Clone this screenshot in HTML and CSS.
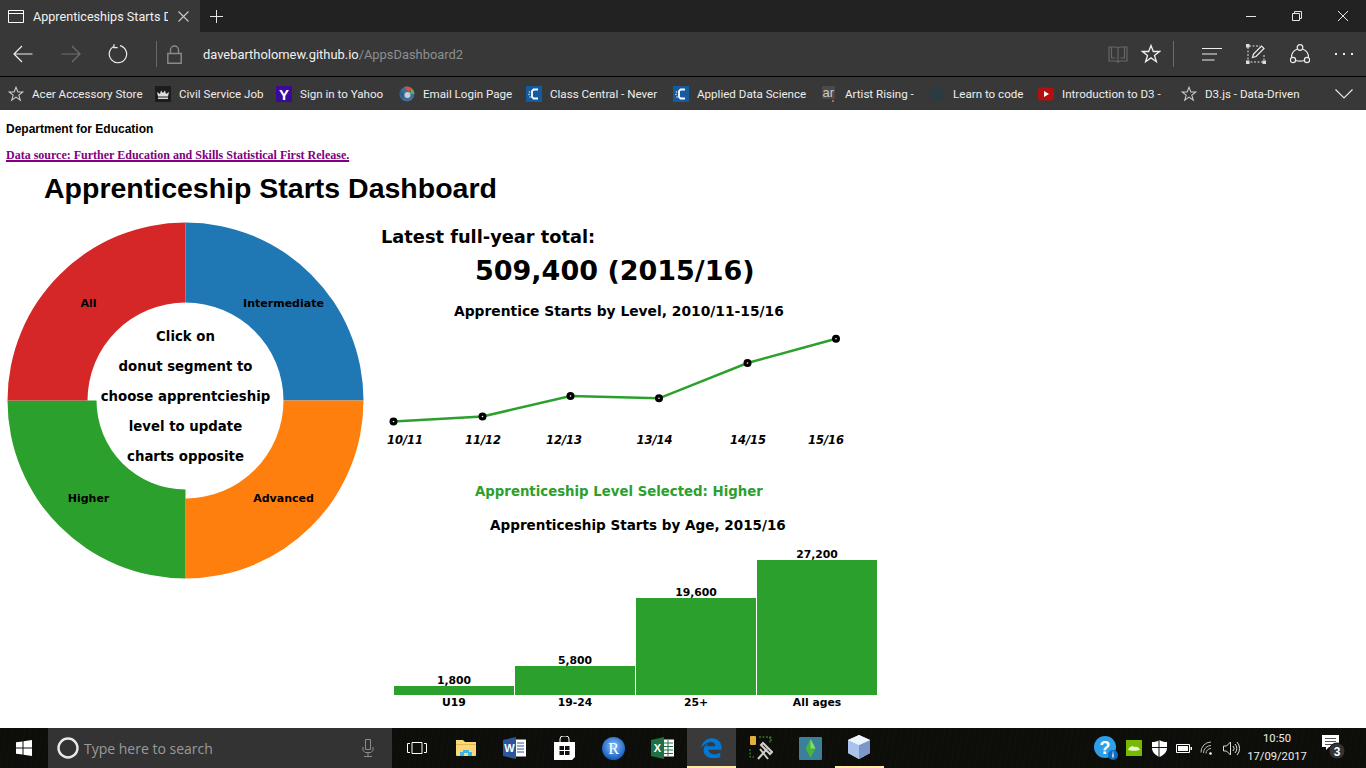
FILE: index.html
```html
<!DOCTYPE html>
<html lang="en">
<head>
  <meta charset="UTF-8" />
  <title>Apprenticeships Starts Dashboard</title>
  <link rel="stylesheet" href="styles.css">
</head>
<body>
  <svg class="defs" width="0" height="0">
    <symbol id="star" viewBox="0 0 20 20">
      <path d="M10 1.5l2.3 6h6.2l-5 3.9 1.9 6.3-5.4-3.8-5.4 3.8 1.9-6.3-5-3.9h6.2z" fill="none" stroke="currentColor" stroke-width="1.3" stroke-linejoin="miter"/>
    </symbol>
    <symbol id="cc" viewBox="0 0 16 16">
      <rect width="16" height="16" fill="#145a9e"/>
      <path d="M12 3.500H7.500L6 5v6l1.500 1.500H12" fill="none" stroke="#fff" stroke-width="1.800"/>
      <circle cx="3.500" cy="6" r=".8" fill="#cfe2f3"/>
      <circle cx="3" cy="8.500" r=".8" fill="#cfe2f3"/>
      <circle cx="4" cy="11" r=".8" fill="#cfe2f3"/>
    </symbol>
  </svg>

  <header class="browser">
    <div class="tabstrip">
      <div class="tab">
        <svg class="tab-icon" width="16" height="13" viewBox="0 0 16 13"><path d="M.5.5h15v12H.5zM.5 3.5h15" fill="none" stroke="#fff"/></svg>
        <span class="tab-title">Apprenticeships Starts D</span>
        <svg class="tab-close" width="11" height="11" viewBox="0 0 11 11"><path d="M.5.5l10 10M10.5.5l-10 10" stroke="#ccc" stroke-width="1.1"/></svg>
      </div>
      <svg class="new-tab" width="13" height="13" viewBox="0 0 13 13"><path d="M6.5 0v13M0 6.5h13" stroke="#e6e6e6" stroke-width="1"/></svg>
      <div class="win-btns">
        <svg width="10" height="10" viewBox="0 0 10 10"><path d="M0 5.5h10" stroke="#e6e6e6"/></svg>
        <svg width="10" height="10" viewBox="0 0 10 10"><path d="M.5 2.5h7v7h-7zM2.5 2.5v-2h7v7h-2" fill="none" stroke="#e6e6e6"/></svg>
        <svg width="10" height="10" viewBox="0 0 10 10"><path d="M0 0l10 10M10 0L0 10" stroke="#e6e6e6" stroke-width="1"/></svg>
      </div>
    </div>

    <div class="toolbar">
      <svg class="nav-back" width="20" height="18" viewBox="0 0 20 18"><path d="M19.5 9H1M9 1L1 9l8 8" fill="none" stroke="#eee" stroke-width="1.2"/></svg>
      <svg class="nav-forward" width="20" height="18" viewBox="0 0 20 18"><path d="M.5 9H19M11 1l8 8-8 8" fill="none" stroke="#6f6f6f" stroke-width="1.2"/></svg>
      <svg class="nav-refresh" width="20" height="20" viewBox="0 0 20 20"><path d="M6.2 2.2A8.7 8.7 0 1 0 12 1.6M6 .2v3.4h3.6" fill="none" stroke="#eee" stroke-width="1.2"/></svg>
      <span class="tb-sep"></span>
      <svg class="nav-lock" width="15" height="19" viewBox="0 0 15 19"><path d="M.8 8.5h13.4v9.7H.8zM3.5 8.5V5a4 4 0 0 1 8 0v3.5" fill="none" stroke="#8a8a8a" stroke-width="1.4"/></svg>
      <div class="address"><span class="host">davebartholomew.github.io</span><span class="path">/AppsDashboard2</span></div>
      <svg class="tb-book" width="20" height="18" viewBox="0 0 20 18"><path d="M1 2h7l2 1 2-1h7v14h-7l-2 1-2-1H1zM10 3v14M3.500 2v11h4M16.500 2v11h-4" fill="none" stroke="#666" stroke-width="1.2"/></svg>
      <svg class="tb-star"><use href="#star"/></svg>
      <span class="tb-sep"></span>
      <svg class="tb-hub" width="20" height="15" viewBox="0 0 20 15"><path d="M0 1.500h20M0 7h15M0 13h12.500" stroke="#eee" stroke-width="1.2"/></svg>
      <svg class="tb-note" width="20" height="20" viewBox="0 0 20 20"><path d="M2 3v15h15M3 2h11M18 11v5" fill="none" stroke="#ddd" stroke-dasharray="2 1.500"/><path d="M6.500 13.500l1-3.500 8-8 2.500 2.500-8 8z" fill="none" stroke="#eee" stroke-width="1.200"/><rect x="0" y="0" width="3.500" height="3.500" fill="#ddd"/><rect x="0" y="16.500" width="3.500" height="3.500" fill="#ddd"/><rect x="16.500" y="16.500" width="3.500" height="3.500" fill="#ddd"/></svg>
      <svg class="tb-share" width="20" height="20" viewBox="0 0 20 20"><g fill="none" stroke="#eee" stroke-width="1.200"><circle cx="10" cy="3.500" r="2.800"/><circle cx="3" cy="16" r="2.600"/><circle cx="17" cy="16" r="2.600"/><path d="M7.600 5A9 9 0 0 0 1.500 13.800M12.400 5a9 9 0 0 1 6.100 8.800M5.600 16.500c3 .8 6 .8 8.800 0"/></g></svg>
      <div class="tb-more"><i></i><i></i><i></i></div>
    </div>

    <nav class="favbar">
      <a class="fav"><svg class="fav-icon fav-star"><use href="#star"/></svg>Acer Accessory Store</a>
      <a class="fav"><svg class="fav-icon" viewBox="0 0 16 16"><rect width="16" height="16" fill="#1c1c1c"/><path d="M3 10.500L2 6l3 2 1-3.500L8 7l2-2.500L11 8l3-2-1 4.500z" fill="#ddd"/><rect x="3" y="11.500" width="10" height="1.500" fill="#ddd"/></svg>Civil Service Job</a>
      <a class="fav"><svg class="fav-icon" viewBox="0 0 16 16"><rect width="16" height="16" fill="#3b0a9a"/><text class="fav-y" x="8" y="13.500">Y</text></svg>Sign in to Yahoo</a>
      <a class="fav"><svg class="fav-icon" viewBox="0 0 16 16"><circle cx="8" cy="8" r="7.500" fill="#3f6f96"/><path d="M5 1.100A7.500 7.500 0 0 1 13 2.500L10 6z" fill="#d9503f"/><path d="M13 2.500a7.500 7.500 0 0 1 2.500 5.500L11 7.500z" fill="#6cae4d"/><path d="M2 4l3 4-1 5.500A7.500 7.500 0 0 1 2 4z" fill="#2e5e86"/><circle cx="8.500" cy="9" r="3" fill="#c9ced4"/></svg>Email Login Page</a>
      <a class="fav"><svg class="fav-icon"><use href="#cc"/></svg>Class Central - Never</a>
      <a class="fav"><svg class="fav-icon"><use href="#cc"/></svg>Applied Data Science</a>
      <a class="fav"><svg class="fav-icon fav-ar" viewBox="0 0 13 16"><rect width="13" height="13" fill="#4a4a4a"/><text class="fav-art" x=".5" y="11">ar</text><rect x="10" y="14" width="2" height="2" fill="#e0565a"/></svg>Artist Rising -</a>
      <a class="fav"><svg class="fav-icon" viewBox="0 0 16 16"><circle cx="8" cy="8" r="7.500" fill="#2c3a42"/></svg>Learn to code</a>
      <a class="fav"><svg class="fav-icon" viewBox="0 0 16 16"><rect y="1.500" width="16" height="13" rx="3" fill="#b3100f"/><path d="M6 5l5 3-5 3z" fill="#fff"/></svg>Introduction to D3 -</a>
      <a class="fav"><svg class="fav-icon fav-star"><use href="#star"/></svg>D3.js - Data-Driven</a>
      <svg class="fav-more" width="18" height="10" viewBox="0 0 18 10"><path d="M.5.500L9 9l8.500-8.500" fill="none" stroke="#e6e6e6" stroke-width="1.200"/></svg>
    </nav>
  </header>

  <main class="page">
    <div class="dept">Department for Education</div>
    <a class="source" href="#">Data source: Further Education and Skills Statistical First Release.</a>
    <h1>Apprenticeship Starts Dashboard</h1>

    <div class="dash">
      <svg class="donut" width="372" height="372" viewBox="0 215 372 372">
        <path d="M185.500 222.500A178 178 0 0 1 363.500 400.500H283.500A98 98 0 0 0 185.500 302.500Z" fill="#1f77b4"/>
        <path d="M363.500 400.500A178 178 0 0 1 185.500 578.500V498.500A98 98 0 0 0 283.500 400.500Z" fill="#ff7f0e"/>
        <path d="M185.500 578.500A178 178 0 0 1 7.500 400.500H96.500A89 89 0 0 0 185.500 489.500Z" fill="#2ca02c"/>
        <path d="M7.500 400.500A178 178 0 0 1 185.500 222.500V302.500A98 98 0 0 0 87.500 400.500Z" fill="#d62728"/>
        <text class="seg" x="88.500" y="307">All</text>
        <text class="seg" x="283.500" y="307">Intermediate</text>
        <text class="seg" x="88.500" y="502">Higher</text>
        <text class="seg" x="283.500" y="502">Advanced</text>
        <text class="hint" x="185.500" y="341">Click on</text>
        <text class="hint" x="185.500" y="371">donut segment to</text>
        <text class="hint" x="185.500" y="401">choose apprentcieship</text>
        <text class="hint" x="185.500" y="431">level to update</text>
        <text class="hint" x="185.500" y="461">charts opposite</text>
      </svg>

      <section class="panel">
        <div class="latest">Latest full-year total:</div>
        <div class="total">509,400 (2015/16)</div>
        <div class="chart-title level-title">Apprentice Starts by Level, 2010/11-15/16</div>
        <svg class="line-chart" width="520" height="125" viewBox="372 325 520 125">
          <polyline points="393.500,421.500 482.500,416.500 570.500,396 659,398.300 747.500,363 836,338.700" fill="none" stroke="#2ca02c" stroke-width="2.500"/>
          <g fill="#fff" stroke="#000" stroke-width="3.200">
            <circle cx="393.500" cy="421.500" r="2.400"/>
            <circle cx="482.500" cy="416.500" r="2.400"/>
            <circle cx="570.500" cy="396" r="2.400"/>
            <circle cx="659" cy="398.300" r="2.400"/>
            <circle cx="747.500" cy="363" r="2.400"/>
            <circle cx="836" cy="338.700" r="2.400"/>
          </g>
          <text class="year" x="405" y="444">10/11</text>
          <text class="year" x="483" y="444">11/12</text>
          <text class="year" x="564" y="444">12/13</text>
          <text class="year" x="654.500" y="444">13/14</text>
          <text class="year" x="748" y="444">14/15</text>
          <text class="year" x="826" y="444">15/16</text>
        </svg>
        <div class="selected">Apprenticeship Level Selected: Higher</div>
        <div class="chart-title age-title">Apprenticeship Starts by Age, 2015/16</div>
        <svg class="bar-chart" width="520" height="172" viewBox="372 540 520 172">
          <g fill="#2ca02c">
            <rect x="394" y="686" width="120" height="9"/>
            <rect x="515" y="666" width="120" height="29"/>
            <rect x="636" y="598" width="120" height="97"/>
            <rect x="757" y="560" width="120" height="135"/>
          </g>
          <text class="bar-val" x="454" y="684">1,800</text>
          <text class="bar-val" x="575" y="664">5,800</text>
          <text class="bar-val" x="696" y="596">19,600</text>
          <text class="bar-val" x="817" y="558">27,200</text>
          <text class="bar-lab" x="454" y="706">U19</text>
          <text class="bar-lab" x="575" y="706">19-24</text>
          <text class="bar-lab" x="696" y="706">25+</text>
          <text class="bar-lab" x="817" y="706">All ages</text>
        </svg>
      </section>
    </div>
  </main>

  <footer class="taskbar">
    <div class="start"><svg width="16" height="16" viewBox="0 0 16 16"><path d="M0 2.300L6.500 1.400V7.500H0zM7.500 1.200L16 0V7.500H7.500zM0 8.500H6.500V14.600L0 13.700zM7.500 8.500H16V16L7.500 14.800z" fill="#fff"/></svg></div>
    <div class="search">
      <svg class="cortana" width="22" height="22" viewBox="0 0 22 22"><circle cx="11" cy="11" r="9.500" fill="none" stroke="#e8e8e8" stroke-width="2.400"/></svg>
      <span class="search-text">Type here to search</span>
      <svg class="mic" width="12" height="18" viewBox="0 0 12 18"><path d="M3.500.5h5v10h-5zM1 8v3.500L3 13.500h6l2-2V8M6 13.500V17M2 17.500h8" fill="none" stroke="#8c8c8c"/></svg>
    </div>
    <div class="task"><svg width="20" height="12" viewBox="0 0 20 12"><path d="M5 .5h10v11H5zM3 1.500H.5v9H3M17 1.500h2.500v9H17" fill="none" stroke="#fff"/></svg></div>
    <div class="task"><svg width="22" height="18" viewBox="0 0 22 18"><path d="M1 1h7l2 2h11v13a1 1 0 0 1-1 1H2a1 1 0 0 1-1-1z" fill="#f8d878"/><path d="M1 5h20v1H1z" fill="#e3b94f"/><path d="M5 17v-4h3v-2h6v2h3v4h-4v-3h-4v3z" fill="#38b4e6"/></svg></div>
    <div class="task"><svg width="23" height="22" viewBox="0 0 23 22"><rect x="9" y="2.500" width="14" height="17" fill="#fff"/><path d="M14 6h7M14 9h7M14 12h7M14 15h7" stroke="#2b579a"/><path d="M0 3L13 0v22L0 19z" fill="#2b579a"/><text class="ws-letter" x="6.500" y="15">W</text></svg></div>
    <div class="task"><svg width="21" height="24" viewBox="0 0 21 24"><path d="M6 6V3a3 3 0 0 1 3-3h3a3 3 0 0 1 3 3v3" fill="none" stroke="#fff"/><path d="M0 6h21v15l-3 3H0z" fill="#fff"/><path d="M5.500 10h4.500v4H5.500zM11 10h4.500v4H11zM5.500 15h4.500v4H5.500zM11 15h4.500v4H11z" fill="#111"/></svg></div>
    <div class="task"><svg width="23" height="23" viewBox="0 0 23 23"><defs><radialGradient id="rball" cx=".5" cy=".4" r=".6"><stop offset="0" stop-color="#8cc4f8"/><stop offset="1" stop-color="#0f57bd"/></radialGradient></defs><circle cx="11.500" cy="11.500" r="11.500" fill="url(#rball)"/><text class="r-letter" x="11.500" y="17">R</text></svg></div>
    <div class="task"><svg width="23" height="22" viewBox="0 0 23 22"><rect x="9" y="2.500" width="14" height="17" fill="#fff"/><path d="M13 6h9M13 9.500h9M13 13h9M13 16.500h9M17 3v16" stroke="#217346"/><path d="M0 3L13 0v22L0 19z" fill="#1e7145"/><text class="ws-letter" x="6.500" y="15">X</text></svg></div>
    <div class="task task-active"><svg width="21" height="21" viewBox="0 0 24 24"><path d="M.5 11C2 5 7 1.500 12.500 1.500 19 1.500 23.500 6 23.500 12v2.500H8.500c.3 3.500 3.500 5.300 7 5.300 2.500 0 4.800-.7 6.500-1.700v4.700c-2 1-4.500 1.500-7.300 1.500-6.500 0-11.700-3.500-11.700-9.300 0-3.500 2-6.300 5.500-8-1.200 1.200-1.800 2.300-2 3.700h10c0-2.800-1.500-5-5.200-5-4 0-7.600 2.400-10.800 6.300z" fill="#0078d7"/></svg></div>
    <div class="task"><svg width="24" height="24" viewBox="0 0 24 24"><rect x="1" y="0" width="6" height="9" rx="1" fill="#e0b23a"/><path d="M10 1h12v4M1 13v8h4M21 1v7" fill="none" stroke="#4e9a3a" stroke-dasharray="2 1.500"/><path d="M9 23l9-10M14 7l9 9-2 2-9-9zM11 13l8 10" stroke="#cfcfcf" stroke-width="2" fill="none"/></svg></div>
    <div class="task"><svg width="23" height="23" viewBox="0 0 23 23"><rect width="23" height="23" rx="1" fill="#3b7f9a"/><path d="M11.500 2l5 9.500-5 9.500-5-9.500z" fill="#45b53d"/><path d="M11.500 2l5 9.500h-5z" fill="#86dc6a"/></svg></div>
    <div class="task task-open"><svg width="22" height="24" viewBox="0 0 22 24"><path d="M11 0l11 5v13l-11 6-11-6V5z" fill="#d6e4f5"/><path d="M0 5l11 5v14L0 18z" fill="#a9c3ea"/><path d="M11 10l11-5v13l-11 6z" fill="#7d97cc"/><path d="M11 0l11 5-11 5L0 5z" fill="#eef4fb"/></svg></div>

    <div class="tray">
      <span class="tray-item tray-help">
        <svg width="24" height="24" viewBox="0 0 24 24"><circle cx="11" cy="11" r="11" fill="#2f9fe8"/><text class="help-q" x="11" y="17.500">?</text><circle cx="19" cy="19" r="5" fill="#0c6cc0"/><path d="M19 17.500v4M19 15.800v.8" stroke="#fff" stroke-width="1.300"/></svg>
      </span>
      <span class="tray-item tray-green">
        <svg width="16" height="16" viewBox="0 0 16 16"><rect width="16" height="16" fill="#76b900"/><path d="M2 10c1-3 3-4 5-4l1 1c3-1 5 0 6 3-3 1-9 1-12 0z" fill="#e8f5d0"/></svg>
      </span>
      <span class="tray-item tray-shield">
        <svg width="15" height="17" viewBox="0 0 15 17"><path d="M7.500 0c2 1.500 4.500 2 7.500 2v6c0 4-3 7-7.500 9C3 15 0 12 0 8V2c3 0 5.500-.5 7.500-2z" fill="#fff"/><path d="M7 0v17M0 7.500h15" stroke="#111"/></svg>
      </span>
      <span class="tray-item tray-battery">
        <svg width="16" height="9" viewBox="0 0 16 9"><path d="M.5.500h13v8H.5z" fill="none" stroke="#fff"/><rect x="2" y="2" width="10" height="5" fill="#fff"/><rect x="14.500" y="3" width="1.500" height="3" fill="#fff"/></svg>
      </span>
      <span class="tray-item tray-wifi">
        <svg width="16" height="15" viewBox="0 0 16 15"><g fill="none" stroke="#bbb"><path d="M1 11.500A10 10 0 0 1 11 1"/><path d="M3.500 12A7.500 7.500 0 0 1 11 4.500"/><path d="M6 12.500A5 5 0 0 1 11 7.500"/></g><circle cx="10.500" cy="12.500" r="1.300" fill="#fff"/></svg>
      </span>
      <span class="tray-item tray-vol">
        <svg width="17" height="15" viewBox="0 0 17 15"><g fill="none" stroke="#ddd"><path d="M.5 5h3l4-4v13l-4-4h-3z"/><path d="M10 5a3.500 3.500 0 0 1 0 5M12 3a6.500 6.500 0 0 1 0 9M14 1a9.500 9.500 0 0 1 0 13"/></g></svg>
      </span>
      <div class="clock"><span>10:50</span><span>17/09/2017</span></div>
      <span class="tray-item tray-notif">
        <svg width="26" height="27" viewBox="0 0 26 27"><path d="M0 0h17v12H7l-3 3v-3H0z" fill="#fff"/><path d="M3 3.500h11M3 6.500h11M3 9.500h7" stroke="#555"/><circle cx="15" cy="16" r="8" fill="#333" stroke="#111"/><text class="notif-num" x="15" y="20.500">3</text></svg>
      </span>
    </div>
  </footer>
</body>
</html>
```

FILE: styles.css
```css
* {
  box-sizing: border-box;
}
html, body {
  margin: 0;
  padding: 0;
  height: 768px;
  overflow: hidden;
  background: #fff;
}
body {
  display: flex;
  flex-direction: column;
  font-family: "Liberation Sans", Arial, sans-serif;
}
.defs {
  position: absolute;
}

/* browser chrome */
.browser {
  height: 110px;
  flex: none;
  color: #eee;
  font-family: Roboto, sans-serif;
  background: #383838;
}
.tabstrip {
  height: 32px;
  display: flex;
  align-items: center;
  background: #222;
}
.tab {
  width: 200px;
  height: 32px;
  display: flex;
  align-items: center;
  background: #383838;
  padding-left: 8px;
}
.tab-title {
  width: 135px;
  margin-left: 9px;
  font-size: 12.600px;
  white-space: nowrap;
  overflow: hidden;
  color: #f0f0f0;
}
.tab-close {
  margin-left: 10px;
}
.new-tab {
  margin-left: 10px;
}
.win-btns {
  margin-left: auto;
  display: flex;
  gap: 36px;
  margin-right: 18px;
}
.toolbar {
  height: 45px;
  display: flex;
  align-items: center;
  border-bottom: 1px solid #000;
  padding-left: 13px;
}
.nav-forward {
  margin-left: 28px;
}
.nav-refresh {
  margin-left: 27px;
}
.tb-sep {
  width: 1px;
  height: 26px;
  background: #6a6a6a;
}
.toolbar > .tb-sep:nth-of-type(1) {
  margin-left: 28px;
}
.nav-lock {
  margin-left: 10px;
}
.address {
  margin-left: 21px;
  width: 905px;
  font-size: 12.900px;
  white-space: nowrap;
}
.host {
  color: #f0f0f0;
}
.path {
  color: #8f8f8f;
}
.tb-star {
  width: 20px;
  height: 20px;
  margin-left: 13px;
  color: #eee;
}
.toolbar > .tb-star + .tb-sep {
  margin-left: 12px;
  margin-right: 28px;
}
.tb-note {
  margin-left: 24px;
}
.tb-share {
  margin-left: 24px;
}
.tb-more {
  margin-left: 25px;
  display: flex;
  gap: 6px;
}
.tb-more i {
  width: 2px;
  height: 2px;
  background: #eee;
}
.favbar {
  height: 33px;
  display: grid;
  grid-template-columns: 147px 121px 123px 127px 147px 149px 107px 109px 143px 154px 18px;
  align-items: center;
  padding-left: 8px;
  font-size: 11.600px;
}
.fav {
  display: flex;
  align-items: center;
  gap: 8px;
  white-space: nowrap;
  color: #eee;
}
.fav-icon {
  width: 16px;
  height: 16px;
  flex: none;
}
.fav-star {
  color: #ccc;
}
.fav-ar {
  width: 13px;
  margin-right: 2px;
}
.fav-y {
  font: bold 15px "Liberation Sans", sans-serif;
  fill: #fff;
  text-anchor: middle;
}
.fav-art {
  font: 13px "Liberation Sans", sans-serif;
  fill: #ccc;
}

/* page content */
.page {
  height: 618px;
  flex: none;
  overflow: hidden;
}
.dept {
  margin: 12px 0 0 6px;
  font-size: 12px;
  font-weight: bold;
  line-height: 14px;
}
.source {
  display: block;
  width: max-content;
  margin: 12px 0 0 6px;
  font-family: "Liberation Serif", serif;
  font-size: 12px;
  font-weight: bold;
  line-height: 14px;
  color: #800080;
  text-decoration-thickness: 2px;
}
h1 {
  margin: 8px 0 0 44px;
  font-size: 28.500px;
  font-weight: bold;
  line-height: 36px;
}
.dash {
  margin-top: 9px;
  display: flex;
}
.donut {
  flex: none;
}
.seg, .hint, .year, .bar-val, .bar-lab {
  font-family: "DejaVu Sans", Verdana, sans-serif;
  font-weight: bold;
  text-anchor: middle;
}
.seg {
  font-size: 11px;
}
.hint {
  font-size: 13.300px;
}
.panel {
  font-family: "DejaVu Sans", Verdana, sans-serif;
  font-weight: bold;
}
.latest {
  margin: 11px 0 0 9px;
  font-size: 17.800px;
  line-height: 22px;
}
.total {
  margin: 7px 0 0 103px;
  font-size: 27px;
  line-height: 32px;
}
.chart-title, .selected {
  line-height: 18px;
}
.level-title {
  margin: 15px 0 0 82px;
  font-size: 13.830px;
}
.line-chart {
  display: block;
  margin-top: 5px;
}
.year {
  font-size: 11.500px;
  font-style: italic;
}
.selected {
  margin: 33px 0 0 103px;
  font-size: 13.300px;
  color: #2ca02c;
}
.age-title {
  margin: 15px 0 0 118px;
  font-size: 13.550px;
}
.bar-chart {
  display: block;
  margin-top: 6px;
}
.bar-val, .bar-lab {
  font-size: 10.800px;
}

/* taskbar */
.taskbar {
  height: 40px;
  flex: none;
  display: flex;
  background:
    repeating-linear-gradient(100deg, rgba(255, 255, 255, 0.012) 0 1px, transparent 1px 6px),
    #0d0e09;
  color: #eee;
  font-family: Roboto, sans-serif;
}
.start {
  width: 48px;
  display: flex;
  align-items: center;
  justify-content: center;
}
.search {
  width: 344px;
  display: flex;
  align-items: center;
  padding-left: 9px;
  background: #333;
}
.search-text {
  margin-left: 5px;
  width: 278px;
  font-family: "Open Sans", sans-serif;
  font-size: 14px;
  color: #9a9a9a;
}
.task {
  width: 49.200px;
  display: flex;
  align-items: center;
  justify-content: center;
}
.task-active {
  background: #3a3a3a;
  border-bottom: 2px solid #ffe9a8;
}
.task-open {
  border-bottom: 2px solid #ffe9a8;
}
.ws-letter {
  font: bold 11px "Liberation Sans", sans-serif;
  fill: #fff;
  text-anchor: middle;
}
.r-letter {
  font: 16px "Liberation Serif", serif;
  fill: #fff;
  text-anchor: middle;
}
.tray {
  margin-left: auto;
  display: flex;
  align-items: center;
}
.tray-item {
  display: flex;
  align-items: center;
  justify-content: center;
}
.tray-help { width: 28px; }
.tray-green { width: 27px; }
.tray-shield { width: 24px; }
.tray-battery { width: 25px; }
.tray-wifi { width: 24px; }
.tray-vol { width: 23px; }
.tray-notif {
  width: 55px;
  padding-right: 8px;
}
.clock {
  width: 68px;
  display: flex;
  flex-direction: column;
  align-items: center;
  gap: 2px;
  font-size: 11.200px;
  line-height: 16px;
}
.help-q {
  font: bold 18px "Liberation Sans", sans-serif;
  fill: #fff;
  text-anchor: middle;
}
.notif-num {
  font: bold 12px "Liberation Sans", sans-serif;
  fill: #fff;
  text-anchor: middle;
}
```
